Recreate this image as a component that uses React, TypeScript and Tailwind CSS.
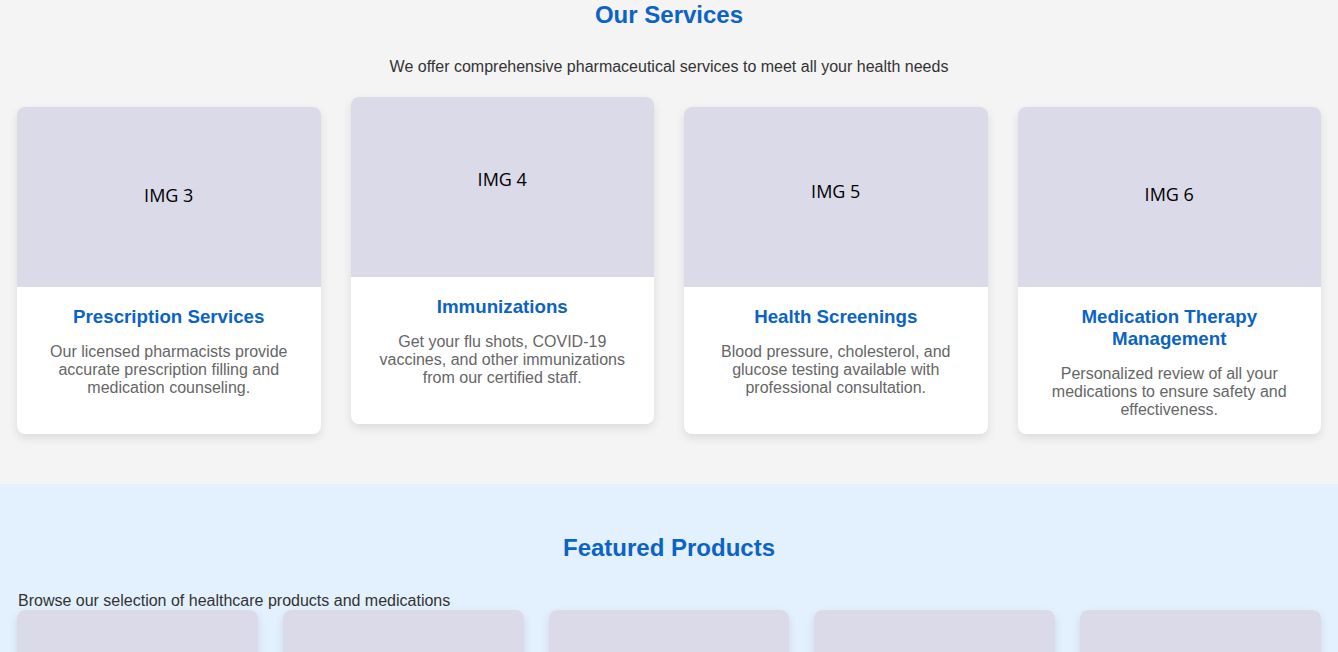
import React from 'react';

const services = [
  {
    img: 'IMG 3',
    title: 'Prescription Services',
    text: 'Our licensed pharmacists provide accurate prescription filling and medication counseling.',
    lift: false,
    labelPad: 'pb-[4px]',
  },
  {
    img: 'IMG 4',
    title: 'Immunizations',
    text: 'Get your flu shots, COVID-19 vaccines, and other immunizations from our certified staff.',
    lift: true,
    labelPad: 'pb-[16px]',
  },
  {
    img: 'IMG 5',
    title: 'Health Screenings',
    text: 'Blood pressure, cholesterol, and glucose testing available with professional consultation.',
    lift: false,
    labelPad: 'pb-[12px]',
  },
  {
    img: 'IMG 6',
    title: 'Medication Therapy Management',
    text: 'Personalized review of all your medications to ensure safety and effectiveness.',
    lift: false,
    labelPad: 'pb-[6px]',
  },
];

const products = [1, 2, 3, 4, 5];

export default function App() {
  return (
    <div className="font-['Liberation_Sans',Arial,sans-serif] text-[#333]">
      <section className="bg-[#f4f4f4] px-[17px] pt-px pb-[50px]">
        <h2 className="text-center text-[24px] leading-[28px] font-bold text-[#0b63c4]">
          Our Services
        </h2>
        <p className="mt-[29px] text-center text-[16px] leading-[18px] text-[#333]">
          We offer comprehensive pharmaceutical services to meet all your health needs
        </p>
        <div className="mt-[31px] grid grid-cols-4 gap-[30px]">
          {services.map((s) => (
            <div
              key={s.img}
              className={`flex flex-col overflow-hidden rounded-lg bg-white shadow-[0_4px_10px_rgba(0,0,0,0.1)] ${
                s.lift ? '-translate-y-[10px]' : ''
              }`}
            >
              <div
                className={`flex h-[180px] items-center justify-center bg-[#dadae8] font-['Open_Sans',sans-serif] text-[18px] text-black ${s.labelPad}`}
              >
                {s.img}
              </div>
              <div className="px-5 pt-[19px] pb-[15px] text-center">
                <h3 className="text-[18.72px] leading-[22px] font-bold text-[#0b63c4]">
                  {s.title}
                </h3>
                <p className="mt-[15px] text-[16px] leading-[18px] text-[#666]">{s.text}</p>
              </div>
            </div>
          ))}
        </div>
      </section>

      <section className="bg-[#e3f0fd] px-[17px] pt-[50px] pb-[50px]">
        <h2 className="text-center text-[24px] leading-[28px] font-bold text-[#0b63c4]">
          Featured Products
        </h2>
        <p className="mt-[30px] pl-px text-[16px] leading-[18px] text-[#333]">
          Browse our selection of healthcare products and medications
        </p>
        <div className="grid grid-cols-5 gap-[25px]">
          {products.map((p) => (
            <div
              key={p}
              className="overflow-hidden rounded-lg bg-white shadow-[0_4px_10px_rgba(0,0,0,0.1)]"
            >
              <div className="h-[180px] bg-[#dadae8]" />
              <div className="h-[120px]" />
            </div>
          ))}
        </div>
      </section>
    </div>
  );
}
